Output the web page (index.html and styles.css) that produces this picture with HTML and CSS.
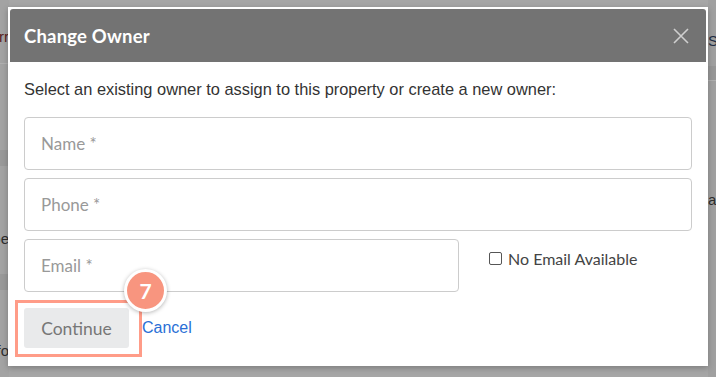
FILE: index.html
```html
<!DOCTYPE html>
<html>
<head>
  <meta charset="utf-8">
  <meta name="viewport" content="width=device-width, initial-scale=1.0" />
  <title>Change Owner</title>
  <link rel="stylesheet" href="styles.css">
</head>
<body>

<!-- 背景页面（被遮罩） -->
<div class="page">
  <div class="side-left">
    <div class="row row-top"><span class="frag frag-red">Turr</span></div>
    <div class="row row-band"></div>
    <div class="row row-mid"><span class="frag">Type</span></div>
    <div class="row row-band row-band-2"></div>
    <div class="row row-low"><span class="frag">Info</span></div>
  </div>
  <div class="page-main"></div>
  <div class="side-right">
    <div class="row row-s"><span class="frag frag-blue">Stat</span></div>
    <div class="row row-band-r"></div>
    <div class="row row-ai"><span class="frag">aint</span></div>
  </div>
</div>

<!-- 弹窗 -->
<div class="modal">
  <div class="modal-header">
    <h2 class="modal-title">Change Owner</h2>
    <button class="modal-close" aria-label="Close">
      <svg width="16" height="16" viewBox="0 0 16 16">
        <path d="M1 1 L15 15 M15 1 L1 15" stroke="#cfcfcf" stroke-width="1.6" fill="none" />
      </svg>
    </button>
  </div>

  <div class="modal-body">
    <p class="intro">Select an existing owner to assign to this property or create a new owner:</p>

    <input class="field" type="text" placeholder="Name *" />
    <input class="field" type="text" placeholder="Phone *" />

    <div class="email-row">
      <input class="field field-email" type="text" placeholder="Email *" />
      <label class="no-email"><span class="check"></span>No Email Available</label>
    </div>

    <div class="actions">
      <div class="btn-wrap">
        <button class="btn-continue">Continue</button>
        <!-- 引导高亮框 + 步骤编号 -->
        <span class="highlight"></span>
        <span class="step-badge">7</span>
      </div>
      <a class="cancel" href="#">Cancel</a>
    </div>
  </div>
</div>

</body>
</html>
```

FILE: styles.css
```css
/* 全局 */
body {
  margin: 0;
  height: 377px;
  overflow: hidden;
  background: #a6a6a6;
  font-family: "Liberation Sans", Arial, sans-serif;
  position: relative;
}

/* 背景页面 */
.page {
  display: flex;
  height: 377px;
}

.side-left {
  width: 9px;
  overflow: hidden;
  background: #a3a3a3;
}

.page-main {
  flex: 1;
}

.side-right {
  width: 8px;
  overflow: hidden;
  background: #a0a0a0;
}

.row {
  display: flex;
  justify-content: flex-end;
  font-size: 15px;
  color: #2e2e2e;
}

.side-right .row {
  justify-content: flex-start;
}

.frag {
  white-space: nowrap;
}

.frag-red {
  color: #5a1d1d;
}

.frag-blue {
  color: #1f2e44;
}

.row-top {
  height: 64px;
  padding-top: 28px;
  box-sizing: border-box;
  border-bottom: 1px solid #b0b0b0;
}

.row-band {
  height: 16px;
  margin-top: 86px;
  background: #999;
}

.row-band-2 {
  margin-top: 0;
}

.row-mid {
  height: 108px;
  padding-top: 64px;
  box-sizing: border-box;
}

.row-low {
  padding-top: 52px;
}

.row-s {
  height: 66px;
  padding-top: 32px;
  box-sizing: border-box;
}

.row-band-r {
  height: 14px;
  background: #979797;
  border-bottom: 1px solid #b0b0b0;
}

.row-ai {
  padding-top: 110px;
}

/* 弹窗 */
.modal {
  position: absolute;
  left: 8px;
  top: 7px;
  width: 700px;
  height: 359px;
  box-sizing: border-box;
  padding: 2px;
  background: #fff;
  box-shadow: 0 2px 6px rgba(0, 0, 0, 0.25);
}

.modal-header {
  height: 53px;
  display: flex;
  align-items: center;
  justify-content: space-between;
  padding: 0 17px 0 14px;
  background: #737373;
  border-radius: 3px 3px 0 0;
}

.modal-title {
  margin: 0;
  font-family: Lato, sans-serif;
  font-size: 18.5px;
  font-weight: 700;
  color: #fff;
  letter-spacing: 0.2px;
}

.modal-close {
  border: none;
  background: none;
  padding: 0;
  width: 16px;
  height: 16px;
  cursor: pointer;
}

.modal-body {
  padding: 17px 14px 0 14px;
}

.intro {
  margin: 0 0 17px 0;
  font-size: 16.4px;
  line-height: 21px;
  color: #333;
}

.field {
  display: block;
  width: 100%;
  height: 53px;
  box-sizing: border-box;
  margin-bottom: 8px;
  padding: 0 16px;
  border: 1px solid #ccc;
  border-radius: 4px;
  font-family: Lato, sans-serif;
  font-size: 17px;
  color: #333;
  outline: none;
}

.field::placeholder {
  color: #999;
}

.email-row {
  display: flex;
  align-items: flex-start;
}

.field-email {
  width: 435px;
  margin-bottom: 0;
}

.no-email {
  display: flex;
  align-items: center;
  margin: 10px 0 0 30px;
  font-family: Lato, sans-serif;
  font-size: 16px;
  color: #444;
}

.check {
  width: 11px;
  height: 11px;
  border: 1px solid #555;
  border-radius: 2px;
  margin-right: 6px;
}

.actions {
  display: flex;
  align-items: center;
  margin-top: 16px;
}

.btn-wrap {
  position: relative;
}

.btn-continue {
  display: block;
  width: 105px;
  height: 40px;
  border: none;
  border-radius: 3px;
  background: #e9eaeb;
  font-family: Lato, sans-serif;
  font-size: 17.5px;
  color: #777;
}

.cancel {
  margin-left: 13px;
  font-size: 16px;
  color: #2a6fd6;
  text-decoration: none;
}

/* 引导高亮 */
.highlight {
  position: absolute;
  left: -9px;
  top: -8px;
  width: 127px;
  height: 57px;
  box-sizing: border-box;
  border: 3px solid #ff9c88;
}

.step-badge {
  position: absolute;
  left: 100px;
  top: -39px;
  width: 43px;
  height: 43px;
  box-sizing: border-box;
  border: 3px solid #fff;
  border-radius: 50%;
  background: #f8957f;
  box-shadow: 0 1px 4px rgba(0, 0, 0, 0.3);
  display: flex;
  align-items: center;
  justify-content: center;
  font-family: Lato, sans-serif;
  font-size: 21px;
  font-weight: 700;
  color: #fff;
}
```
